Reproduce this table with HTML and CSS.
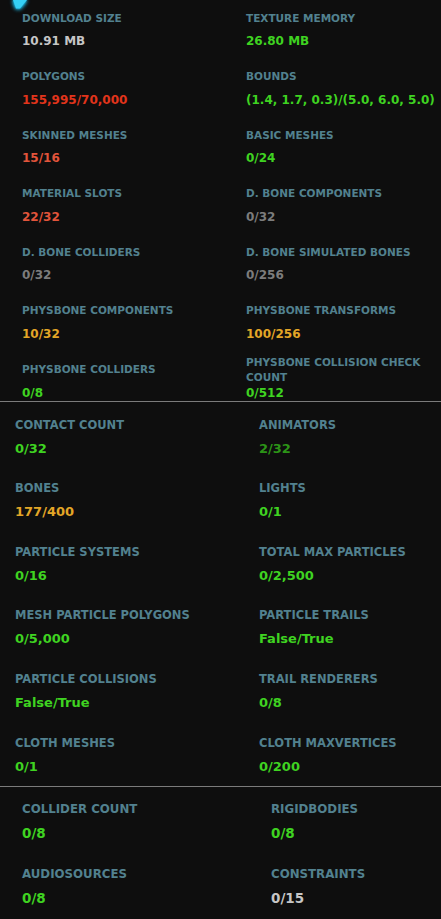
FILE: index.html
```html
<!DOCTYPE html>
<html lang="en">
<head>
  <meta charset="UTF-8">
  <title>Avatar Performance Stats</title>
  <meta name="viewport" content="width=device-width, initial-scale=1.0">
  <link rel="stylesheet" href="styles.css">
</head>
<body>
  <!-- cut-off pointer from the panel above -->
  <svg class="pointer" width="20" height="12" viewBox="0 0 20 12">
    <polygon points="3,0 17,0 10,8.5 6,8.5" fill="#35d0f5"/>
  </svg>

  <section class="stats stats-main">
    <div class="stat"><div class="label">Download Size</div><div class="value white">10.91 MB</div></div>
    <div class="stat"><div class="label">Texture Memory</div><div class="value green">26.80 MB</div></div>
    <div class="stat"><div class="label">Polygons</div><div class="value red">155,995/70,000</div></div>
    <div class="stat"><div class="label">Bounds</div><div class="value green">(1.4, 1.7, 0.3)/(5.0, 6.0, 5.0)</div></div>
    <div class="stat"><div class="label">Skinned Meshes</div><div class="value salmon">15/16</div></div>
    <div class="stat"><div class="label">Basic Meshes</div><div class="value green">0/24</div></div>
    <div class="stat"><div class="label">Material Slots</div><div class="value salmon">22/32</div></div>
    <div class="stat"><div class="label">D. Bone Components</div><div class="value grey">0/32</div></div>
    <div class="stat"><div class="label">D. Bone Colliders</div><div class="value grey">0/32</div></div>
    <div class="stat"><div class="label">D. Bone Simulated Bones</div><div class="value grey">0/256</div></div>
    <div class="stat"><div class="label">PhysBone Components</div><div class="value yellow">10/32</div></div>
    <div class="stat"><div class="label">PhysBone Transforms</div><div class="value yellow">100/256</div></div>
    <div class="stat"><div class="label">PhysBone Colliders</div><div class="value green">0/8</div></div>
    <div class="stat"><div class="label">PhysBone Collision Check Count</div><div class="value green">0/512</div></div>
  </section>

  <section class="stats stats-mid">
    <div class="stat"><div class="label">Contact Count</div><div class="value green">0/32</div></div>
    <div class="stat"><div class="label">Animators</div><div class="value dark-green">2/32</div></div>
    <div class="stat"><div class="label">Bones</div><div class="value yellow">177/400</div></div>
    <div class="stat"><div class="label">Lights</div><div class="value green">0/1</div></div>
    <div class="stat"><div class="label">Particle Systems</div><div class="value green">0/16</div></div>
    <div class="stat"><div class="label">Total Max Particles</div><div class="value green">0/2,500</div></div>
    <div class="stat"><div class="label">Mesh Particle Polygons</div><div class="value green">0/5,000</div></div>
    <div class="stat"><div class="label">Particle Trails</div><div class="value green">False/True</div></div>
    <div class="stat"><div class="label">Particle Collisions</div><div class="value green">False/True</div></div>
    <div class="stat"><div class="label">Trail Renderers</div><div class="value green">0/8</div></div>
    <div class="stat"><div class="label">Cloth Meshes</div><div class="value green">0/1</div></div>
    <div class="stat"><div class="label">Cloth MaxVertices</div><div class="value green">0/200</div></div>
  </section>

  <section class="stats stats-low">
    <div class="stat"><div class="label">Collider Count</div><div class="value green">0/8</div></div>
    <div class="stat"><div class="label">Rigidbodies</div><div class="value green">0/8</div></div>
    <div class="stat"><div class="label">AudioSources</div><div class="value green">0/8</div></div>
    <div class="stat"><div class="label">Constraints</div><div class="value white">0/15</div></div>
  </section>
</body>
</html>
```

FILE: styles.css
```css
body {
  margin: 0;
  min-height: 100vh;
  background: #0e0e0e;
  font-family: 'DejaVu Sans', Verdana, sans-serif;
  font-weight: bold;
  position: relative;
  overflow: hidden;
}
.pointer {
  position: absolute;
  top: 0;
  left: 10px;
  filter: drop-shadow(0 0 2px #1ab8e6) drop-shadow(0 0 1px #1ab8e6);
}
.stats {
  display: grid;
}
.stat {
  display: flex;
  flex-direction: column;
}
.label {
  font-size: 10.5px;
  line-height: 15px;
  color: #52818f;
  text-transform: uppercase;
}
.value {
  font-size: 12px;
  line-height: 16px;
  white-space: nowrap;
}

/* top block: labels sit in a fixed box so two-line labels stay centred */
.stats-main {
  grid-template-columns: 224px 1fr;
  row-gap: 12.6px;
  padding: 3px 10px 0 22px;
  border-bottom: 1px solid #7b7b7b;
}
.stats-main .label {
  height: 30px;
  display: flex;
  align-items: center;
}

/* lower blocks use a slightly larger type */
.stats-mid .label,
.stats-low .label {
  line-height: 16px;
  margin-bottom: 7px;
}
.stats-mid .value,
.stats-low .value { line-height: 18px; }
.stats-mid .label { font-size: 11.5px; }
.stats-mid .value { font-size: 13px; }
.stats-low .label { font-size: 11.8px; }
.stats-low .value { font-size: 13.5px; }

.stats-mid {
  grid-template-columns: 244px 1fr;
  row-gap: 22.6px;
  padding: 15px 10px 10px 15px;
  border-bottom: 1px solid #7b7b7b;
}
.stats-low {
  grid-template-columns: 249px 1fr;
  row-gap: 24px;
  padding: 14px 10px 0 22px;
}

.white { color: #c6c6c6; }
.grey { color: #7c7c7c; }
.green { color: #3fd321; }
.dark-green { color: #2c9417; }
.red { color: #e2341b; }
.salmon { color: #e2543b; }
.yellow { color: #e3a627; }
```
